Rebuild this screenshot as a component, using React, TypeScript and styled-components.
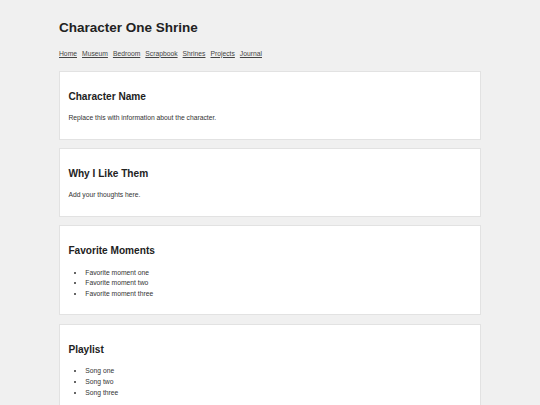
import React from 'react';
import styled, { createGlobalStyle } from 'styled-components';

const GlobalStyle = createGlobalStyle`
    html, body {
        margin: 0;
        padding: 0;
        background-color: #f0f0f0;
    }
    body {
        font-family: 'Liberation Sans', Arial, sans-serif;
        font-size: 6.75px;
        line-height: 1.6;
        color: #333333;
    }
`;

const Page = styled.div`
    max-width: 422px;
    margin: 0 auto;
    padding: 8.4px 0;`;

const Title = styled.h1`
    font-size: 13.5px;
    line-height: 21.6px;
    font-weight: bold;
    color: #222222;
    margin: 8.4px 0 10.2px 0;`;

const Nav = styled.nav`
    display: flex;
    gap: 5px;
    line-height: 10.8px;
    margin-bottom: 11.6px;`;

const NavLink = styled.a`
    color: #444444;
    text-decoration: underline;
    &:hover {
        cursor: pointer;
    }
`;

const Card = styled.section`
    background-color: #ffffff;
    border: 1px solid #e2e2e2;
    padding: 8.4px 8.4px 7.8px 8.4px;
    margin-bottom: 8.4px;`;

const CardTitle = styled.h2`
    font-size: 10.125px;
    line-height: 16.2px;
    font-weight: bold;
    color: #222222;
    margin: 8.4px 0;`;

const Text = styled.p`
    margin: 6.75px 0;
    color: #333333;`;

const List = styled.ul`
    margin: 6.75px 0;
    padding-left: 16.9px;
    color: #333333;`;

const Item = styled.li`
    line-height: 10.8px;`;

const sections = [
    { title: 'Character Name', text: 'Replace this with information about the character.' },
    { title: 'Why I Like Them', text: 'Add your thoughts here.' },
    { title: 'Favorite Moments', items: ['Favorite moment one', 'Favorite moment two', 'Favorite moment three'] },
    { title: 'Playlist', items: ['Song one', 'Song two', 'Song three'] },
];

const links = ['Home', 'Museum', 'Bedroom', 'Scrapbook', 'Shrines', 'Projects', 'Journal'];

const App = () => {
    return (
        <>
            <GlobalStyle />
            <Page>
                <Title>Character One Shrine</Title>
                <Nav>
                    {links.map((link) => (
                        <NavLink key={link}>{link}</NavLink>
                    ))}
                </Nav>
                {sections.map((section) => (
                    <Card key={section.title}>
                        <CardTitle>{section.title}</CardTitle>
                        {section.text && <Text>{section.text}</Text>}
                        {section.items && (
                            <List>
                                {section.items.map((item) => (
                                    <Item key={item}>{item}</Item>
                                ))}
                            </List>
                        )}
                    </Card>
                ))}
            </Page>
        </>
    );
};

export default App;
